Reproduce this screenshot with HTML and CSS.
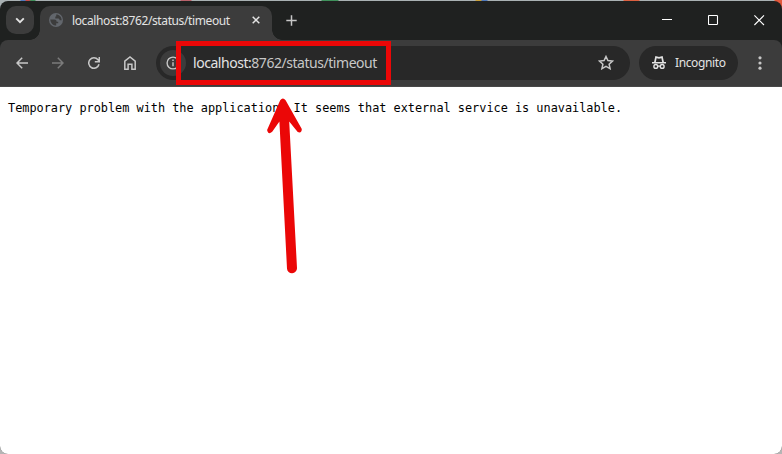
FILE: index.html
```html
<!DOCTYPE html>
<html lang="en">
<head>
<meta charset="utf-8">
<title>localhost:8762/status/timeout</title>
<link rel="stylesheet" href="styles.css">
</head>
<body>
<div class="desktop">
<div class="window">
  <header class="titlebar">
    <div class="tab-search"><svg width="10" height="7" viewBox="0 0 10 7"><path d="M1.2 1.3 5 5.1 8.8 1.3" fill="none" stroke="#e3e3e3" stroke-width="1.9"/></svg></div>
    <div class="tab">
      <svg class="globe" width="14" height="14" viewBox="0 0 14 14"><circle cx="7" cy="7" r="7" fill="#62666c"/><path d="M1.3 6.5H5.2C7 6.5 7.6 7.3 7.6 8.7H9.2V10.3H7.2V12.6C4.2 12.6 1.5 10.3 1.3 6.5ZM7.2 1.4C10.5 1.4 12.6 4 12.7 7.2H10.6C10.6 5.9 10 5.4 8.6 5.4H6.3V3.4H7.2Z" fill="#3c3c3c"/></svg>
      <span class="tab-title">localhost:8762/status/timeout</span>
      <svg class="tab-close" width="8" height="8" viewBox="0 0 8 8"><path d="m.7.7 6.6 6.6m0-6.6L.7 7.3" stroke="#e3e3e3" stroke-width="1.5"/></svg>
    </div>
    <svg class="new-tab" width="11" height="11" viewBox="0 0 11 11"><path d="M5.5.3v10.4M.3 5.5h10.4" stroke="#c7c7c7" stroke-width="1.5"/></svg>
    <div class="controls">
      <svg width="11" height="11" viewBox="0 0 11 11"><path d="M0 4.5h10" stroke="#fff"/></svg>
      <svg width="11" height="11" viewBox="0 0 11 11"><rect x=".5" y=".5" width="9" height="9" rx=".8" fill="none" stroke="#fff" stroke-width="1.1"/></svg>
      <svg width="11" height="11" viewBox="0 0 11 11"><path d="m.4.4 9.6 9.6m0-9.6L.4 10" stroke="#fff" stroke-width="1.1"/></svg>
    </div>
  </header>
  <nav class="toolbar">
    <div class="nav-icons">
      <svg width="12" height="12" viewBox="0 0 12 12"><path d="M12 6H1.2M6.2.8 1 6l5.2 5.2" fill="none" stroke="#c7c7c7" stroke-width="1.5"/></svg>
      <svg width="12" height="12" viewBox="0 0 12 12"><path d="M0 6h10.8M5.8.8 11 6l-5.2 5.2" fill="none" stroke="#7b7b7b" stroke-width="1.5"/></svg>
      <svg width="12" height="12" viewBox="0 0 12 12"><path d="M11 7.3A5.2 5.2 0 1 1 10 2.8L11.2 4.3M11.3 0v4.7H6.8" fill="none" stroke="#c7c7c7" stroke-width="1.5"/></svg>
      <svg width="12" height="14" viewBox="0 0 12 14"><path d="M.8 5.2 6 1l5.2 4.2v8H7.9V8.2H4.1v5H.8Z" fill="none" stroke="#c7c7c7" stroke-width="1.5"/></svg>
    </div>
    <div class="omnibox">
      <div class="site-info"><svg width="14" height="14" viewBox="0 0 14 14"><circle cx="7" cy="7" r="5.9" fill="none" stroke="#c7c7c7" stroke-width="1.4"/><path d="M7 6.2v4M7 3.6v1.5" stroke="#c7c7c7" stroke-width="1.4"/></svg></div>
      <div class="url"><span class="host">localhost:</span>8762/status/timeout</div>
      <svg class="star" width="16" height="15" viewBox="0 0 16 15"><path d="m8 1.5 1.9 4.1 4.6.5-3.4 3.1 1 4.5L8 11.4l-4.1 2.3 1-4.5-3.4-3.1 4.6-.5Z" fill="none" stroke="#c7c7c7" stroke-width="1.5"/></svg>
    </div>
    <div class="incognito">
      <svg width="14" height="13" viewBox="0 0 14 13"><path d="M0 6.7h14" stroke="#e3e3e3" stroke-width="1.5"/><path d="M2.9 6.2 4 1.1 7 1.8l3-.7 1.1 5.1" fill="none" stroke="#e3e3e3" stroke-width="1.7"/><circle cx="3.8" cy="10.4" r="1.9" fill="none" stroke="#e3e3e3" stroke-width="1.4"/><circle cx="10.2" cy="10.4" r="1.9" fill="none" stroke="#e3e3e3" stroke-width="1.4"/><path d="M5.7 10.1h2.6" stroke="#e3e3e3" stroke-width="1.2"/></svg>
      <span class="incognito-label">Incognito</span>
    </div>
    <svg class="menu" width="4" height="14" viewBox="0 0 4 14"><g fill="#c7c7c7"><circle cx="2" cy="1.8" r="1.6"/><circle cx="2" cy="7" r="1.6"/><circle cx="2" cy="12.2" r="1.6"/></g></svg>
  </nav>
  <main class="page"><pre class="message">Temporary problem with the application. It seems that external service is unavailable.</pre></main>
</div>
<div class="highlight"></div>
<svg class="arrow" width="40" height="180" viewBox="0 0 40 180"><path d="M15.2 4.2Q17.9 1 20.6 4.2L36.8 33Q36.8 37.5 32.7 36L24.2 25.5 32 172a5 5 0 0 1-10 .4L14.4 25.5 7.2 35.8Q3 39.2 2.1 34Z" fill="#eb0707"/></svg>
</div>
</body>
</html>
```
FILE: styles.css
```css
body { margin: 0; }
svg { display: block; flex: none; }
.desktop {
  position: relative;
  box-sizing: border-box;
  width: 782px;
  height: 454px;
  padding-top: 1px;
  overflow: hidden;
  background: linear-gradient(90deg, #a9b1b3 20px, #4f79bd 21px 25px, #c64a4b 26px 29px, #3f915b 31px 35px, #a9b1b3 36px 180px, #b9626b 181px 191px, #a9b1b3 192px 321px, #3f915b 322px 338px, #a9b1b3 339px 475px, #c9a13c 476px 481px, #4f79bd 482px 487px, #a9b1b3 488px 623px, #dc6040 624px 639px, #a9b1b3 640px 774px, #e2573a 775px) 0 0 / 782px 10px no-repeat #b5b5b5;
  font-family: "Noto Sans", "Open Sans", sans-serif;
}
.window {
  display: flex;
  flex-direction: column;
  height: 453px;
  border-radius: 8px;
  overflow: hidden;
  background: #1f2120;
}
.titlebar { display: flex; height: 39px; }
.tab-search {
  display: flex;
  align-items: center;
  justify-content: center;
  width: 28px;
  height: 28px;
  margin: 5px 6px 0;
  border-radius: 10px;
  background: #3c3c3c;
}
.tab {
  position: relative;
  display: flex;
  align-items: center;
  box-sizing: border-box;
  width: 232px;
  height: 34px;
  margin-top: 5px;
  padding: 0 12px 6px 9px;
  border-radius: 10px 10px 0 0;
  background: #3c3c3c;
}
.tab::before, .tab::after {
  content: "";
  position: absolute;
  bottom: 0;
  width: 10px;
  height: 10px;
}
.tab::before { left: -10px; background: radial-gradient(circle at 0 0, transparent 9.5px, #3c3c3c 10px); }
.tab::after { right: -10px; background: radial-gradient(circle at 100% 0, transparent 9.5px, #3c3c3c 10px); }
.tab-title {
  width: 168px;
  margin-left: 9px;
  padding-top: 2px;
  font-size: 12px;
  line-height: 18px;
  letter-spacing: -0.39px;
  white-space: nowrap;
  color: #e3e3e3;
}
.tab-close { margin-left: auto; }
.new-tab { margin: 14px 0 0 14px; }
.controls { display: flex; gap: 35px; margin: 14px 17px 0 auto; }
.toolbar {
  display: flex;
  align-items: center;
  box-sizing: border-box;
  height: 47px;
  padding: 0 20px 1px 16px;
  border-bottom: 1px solid #484848;
  border-radius: 8px 8px 0 0;
  background: #3c3c3c;
}
.nav-icons { display: flex; align-items: center; gap: 24px; }
.omnibox {
  display: flex;
  align-items: center;
  box-sizing: border-box;
  width: 474px;
  height: 34px;
  margin-left: 20px;
  padding: 0 16px 0 4px;
  border-radius: 17px;
  background: #282828;
}
.site-info {
  display: flex;
  align-items: center;
  justify-content: center;
  width: 26px;
  height: 26px;
  border-radius: 50%;
  background: #3c3c3c;
}
.url {
  margin-left: 7px;
  padding-top: 1px;
  font-size: 14px;
  line-height: 20px;
  letter-spacing: -0.46px;
  white-space: nowrap;
  color: #c7c7c7;
}
.host { color: #e3e3e3; }
.star { margin-left: auto; }
.incognito {
  display: flex;
  align-items: center;
  box-sizing: border-box;
  width: 99px;
  height: 34px;
  margin-left: 9px;
  padding-left: 13px;
  border-radius: 17px;
  background: #282828;
}
.incognito-label {
  margin-left: 9px;
  padding-top: 1px;
  font-size: 12px;
  line-height: 18px;
  letter-spacing: -0.38px;
  color: #e3e3e3;
}
.menu { margin-left: auto; }
.page { flex: 1; background: #fff; }
.message {
  margin: 14px 8px;
  font-family: "DejaVu Sans Mono", monospace;
  font-size: 11.87px;
  line-height: 15px;
  color: #000;
}
.highlight {
  position: absolute;
  top: 41px;
  left: 176px;
  box-sizing: border-box;
  width: 215px;
  height: 44px;
  border: 5px solid #eb0707;
}
.arrow { position: absolute; top: 96px; left: 265px; }
```
